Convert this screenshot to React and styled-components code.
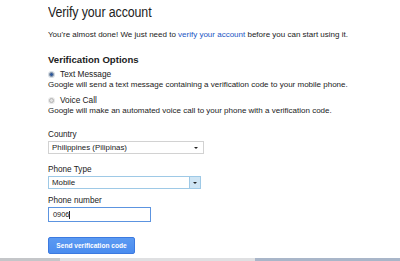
import styled, { createGlobalStyle } from 'styled-components';

const GlobalStyle = createGlobalStyle`
    html, body {
        margin: 0;
        padding: 0;
        background: #fff;
    }
    body {
        font-family: "Liberation Sans", Arial, sans-serif;
        color: #222;
    }
`;

function RadioOption({checked, label, help}) {
    return (
        <Option>
            <RadioRow>
                <Radio $checked={checked} />
                <RadioLabel>{label}</RadioLabel>
            </RadioRow>
            <Help>{help}</Help>
        </Option>
    )
}

export default function App() {
    return (
        <Page>
            <GlobalStyle />
            <Content>
                <Title>Verify your account</Title>
                <Intro>
                    You're almost done! We just need to <LinkText>verify your account</LinkText> before you can start using it.
                </Intro>
                <SectionTitle>Verification Options</SectionTitle>
                <RadioOption
                    checked
                    label="Text Message"
                    help="Google will send a text message containing a verification code to your mobile phone."
                />
                <RadioOption
                    label="Voice Call"
                    help="Google will make an automated voice call to your phone with a verification code."
                />
                <Field $top={14}>
                    <Label>Country</Label>
                    <Select $width={156}>
                        <span>Philippines (Pilipinas)</span>
                        <SmallArrow />
                    </Select>
                </Field>
                <Field $top={11}>
                    <Label>Phone Type</Label>
                    <Select $width={153} $focused>
                        <span>Mobile</span>
                        <DropButton><SmallArrow /></DropButton>
                    </Select>
                </Field>
                <Field $top={7}>
                    <Label>Phone number</Label>
                    <Input>0906<Caret /></Input>
                </Field>
                <SendButton>Send verification code</SendButton>
            </Content>
            <ScrollBar>
                <ScrollPart $color="#c4c6c9" $width={60} />
                <ScrollPart $color="#dfe0e2" $width={195} />
                <ScrollPart $color="#a9b6c9" $grow />
            </ScrollBar>
        </Page>
    )
}

const Page = styled.div`
    width: 400px;
    height: 261px;
    display: flex;
    flex-direction: column;
    overflow: hidden;
`;

const Content = styled.div`
    flex: 1;
    padding: 0 0 0 48px;
    display: flex;
    flex-direction: column;
    align-items: flex-start;
`;

const Title = styled.h1`
    margin: 1px 0 0;
    font-size: 12.4px;
    font-weight: normal;
    letter-spacing: -0.1px;
    line-height: 18px;
    color: #222;
    transform: scaleY(1.25);
    transform-origin: left top;
`;

const Intro = styled.p`
    margin: 11px 0 0;
    font-size: 8px;
    line-height: 10px;
    color: #222;
`;

const LinkText = styled.span`
    color: #1a55c4;
`;

const SectionTitle = styled.h2`
    margin: 14px 0 0;
    font-size: 9.6px;
    font-weight: bold;
    line-height: 12px;
    color: #222;
`;

const Option = styled.div`
    display: flex;
    flex-direction: column;
    margin-top: 3px;
    & + & {
        margin-top: 5px;
    }
`;

const RadioRow = styled.div`
    display: flex;
    align-items: center;
    gap: 6px;
    height: 10px;
    padding-left: 1px;
`;

const Radio = styled.span`
    width: 5px;
    height: 5px;
    border-radius: 50%;
    box-sizing: border-box;
    border: 1px solid ${props => props.$checked ? '#8a98a8' : '#b5b5b5'};
    background: ${props => props.$checked ? '#2f5a9c' : '#e4e4e4'};
    box-shadow: 0 0 0 1px ${props => props.$checked ? '#d4dbe3' : '#e8e8e8'};
`;

const RadioLabel = styled.span`
    font-size: 8.3px;
    line-height: 10px;
    color: #222;
`;

const Help = styled.div`
    font-size: 8px;
    line-height: 10px;
    color: #222;
    margin-top: 1px;
`;

const Field = styled.div`
    display: flex;
    flex-direction: column;
    margin-top: ${props => props.$top}px;
`;

const Label = styled.div`
    font-size: 8.2px;
    line-height: 10px;
    color: #222;
    margin-bottom: 1px;
`;

const Select = styled.div`
    width: ${props => props.$width}px;
    height: 13px;
    box-sizing: border-box;
    border: 1px solid ${props => props.$focused ? '#9ec9e6' : '#d2d2d2'};
    display: flex;
    align-items: center;
    justify-content: space-between;
    padding: 0 ${props => props.$focused ? '0' : '5px'} 0 3px;
    font-size: 7.9px;
    color: #222;
    background: #fff;
`;

const DropButton = styled.div`
    width: 10px;
    height: 100%;
    display: flex;
    align-items: center;
    justify-content: center;
    background: #cfe5f4;
    border-left: 1px solid #9ec9e6;
`;

const SmallArrow = styled.span`
    width: 0;
    height: 0;
    border-left: 2px solid transparent;
    border-right: 2px solid transparent;
    border-top: 2px solid #222;
`;

const Input = styled.div`
    margin-top: 0;
    width: 103px;
    height: 15px;
    box-sizing: border-box;
    border: 1px solid #5c94e0;
    display: flex;
    align-items: center;
    padding-left: 4px;
    font-size: 7.4px;
    color: #222;
`;

const Caret = styled.span`
    width: 1px;
    height: 8px;
    background: #222;
`;

const SendButton = styled.button`
    margin-top: 15px;
    width: 87px;
    height: 17px;
    border: 1px solid #3c7ae0;
    border-radius: 2px;
    background: linear-gradient(#5b9af2, #4a8cef);
    color: #fff;
    font-family: "Liberation Sans", Arial, sans-serif;
    font-weight: bold;
    font-size: 6.6px;
    padding: 0;
`;

const ScrollBar = styled.div`
    height: 3px;
    display: flex;
`;

const ScrollPart = styled.div`
    width: ${props => props.$grow ? 'auto' : props.$width + 'px'};
    flex: ${props => props.$grow ? 1 : 'none'};
    background: ${props => props.$color};
`;
